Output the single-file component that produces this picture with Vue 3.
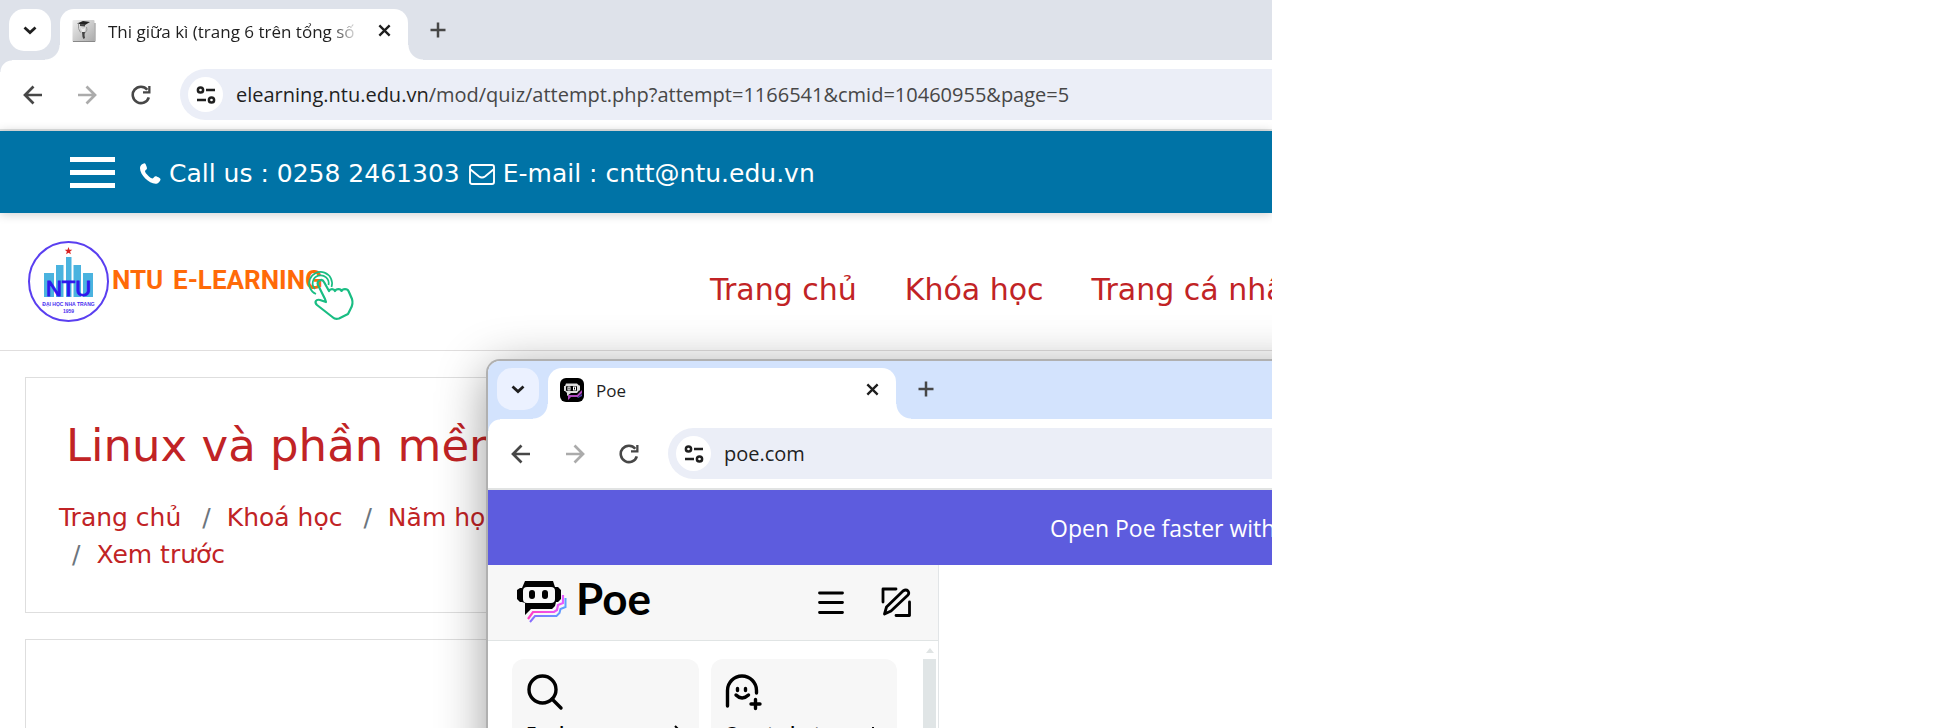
<script setup>
const navLinks = ['Trang chủ', 'Khóa học', 'Trang cá nhân']
const crumbs = ['Trang chủ', 'Khoá học', 'Năm học', 'Xem trước']
</script>

<template>
  <svg class="sprite" aria-hidden="true">
    <symbol id="i-chevron" viewBox="0 0 16 16"><path d="M2.500 5.500 8 10.500l5.500-5" fill="none" stroke="#1f1f1f" stroke-width="2.800" /></symbol>
    <symbol id="i-close" viewBox="0 0 16 16"><path d="M2.500 2.500l11 11M13.500 2.500l-11 11" fill="none" stroke="#1f1f1f" stroke-width="2.500" /></symbol>
    <symbol id="i-plus" viewBox="0 0 16 16"><path d="M8 .5v15M.5 8h15" fill="none" stroke="#474747" stroke-width="2.500" /></symbol>
    <symbol id="i-back" viewBox="0 0 20 20"><path d="M19 10H2.500M10.500 1.500 2 10l8.500 8.500" fill="none" stroke="currentColor" stroke-width="2.700" /></symbol>
    <symbol id="i-reload" viewBox="0 0 20 20">
      <path d="M17.800 12.300A8.200 8.200 0 1 1 16.300 4.700" fill="none" stroke="currentColor" stroke-width="2.600" />
      <path d="M19.500 1v7.500H12V6.200h5.200V1z" fill="currentColor" />
    </symbol>
    <symbol id="i-tune" viewBox="0 0 20 18">
      <g fill="none" stroke="#1f1f1f" stroke-width="2.500">
        <circle cx="4.500" cy="4" r="2.600" /><path d="M10 4h9M1 14h9" /><circle cx="15.500" cy="14" r="2.600" />
      </g>
    </symbol>
  </svg>

  <div class="desktop">
    <section class="browser">
      <div class="strip">
        <button class="search-tabs" aria-label="Search tabs"><svg width="16" height="16"><use href="#i-chevron" /></svg></button>
        <div class="tab">
          <svg class="favicon" width="24" height="24" viewBox="0 0 24 24">
            <defs><linearGradient id="fav" x1="0" y1="0" x2="1" y2="1"><stop offset="0" stop-color="#eee" /><stop offset="1" stop-color="#aaa" /></linearGradient></defs>
            <rect x=".5" y="1" width="22" height="22" rx="1" fill="url(#fav)" />
            <path d="M1 22.500h22V4" fill="none" stroke="#888" />
            <path d="M5 4.500 11 2l7 1-5 3z" fill="#222" />
            <path d="M8 5v2l5 .5V5.500" fill="#444" />
            <path d="M6.500 4.500v5l2 4M14.500 8l.5 3-2 3" fill="none" stroke="#999" />
            <path d="M8.500 8q2.500 4 5 0l-1 5-2 1z" fill="#ececec" />
            <path d="M10 13h3l-.5 3 .5 3-1.500 1-1-2z" fill="#444" />
          </svg>
          <span class="tab-title faded">Thi giữa kì (trang 6 trên tổng số</span>
          <button class="icon-btn" aria-label="Close tab"><svg width="15" height="15"><use href="#i-close" /></svg></button>
        </div>
        <button class="icon-btn new-tab" aria-label="New tab"><svg width="16" height="16"><use href="#i-plus" /></svg></button>
      </div>
      <div class="toolbar">
        <button class="nav-btn" aria-label="Back"><svg width="20" height="20"><use href="#i-back" /></svg></button>
        <button class="nav-btn off" aria-label="Forward"><svg class="flip" width="20" height="20"><use href="#i-back" /></svg></button>
        <button class="nav-btn" aria-label="Reload"><svg width="20" height="20"><use href="#i-reload" /></svg></button>
        <div class="omnibox">
          <button class="site-info" aria-label="Site information"><svg width="20" height="18"><use href="#i-tune" /></svg></button>
          <span class="url">elearning.ntu.edu.vn<span class="path">/mod/quiz/attempt.php?attempt=1166541&amp;cmid=10460955&amp;page=5</span></span>
        </div>
      </div>

      <div class="contact">
        <button class="burger" aria-label="Menu"><i></i><i></i><i></i></button>
        <svg class="phone" width="21" height="21" viewBox="0 0 21 21"><path d="M.5 3C1.500 1 3.500.2 4.800.2c.7 0 2.200 4 2.200 5 0 1.300-2 2-2 3 0 1.800 5.500 7.300 7.600 7.300 1 0 1.800-2.200 3-2.200 1 0 4.900 2 4.900 2.900 0 2-2.500 4.600-5 4.600C9 20.800 0 12 0 5.300 0 4.500.2 3.700.5 3z" fill="#fff" /></svg>
        <span class="contact-text">Call us : 0258 2461303</span>
        <svg class="mail" width="26" height="21" viewBox="0 0 26 21"><g fill="none" stroke="#fff" stroke-width="1.900"><rect x="1" y="1" width="24" height="19" rx="2" /><path d="M1.500 5.500 10 12.500q3 2 6 0l8.500-7" /></g></svg>
        <span class="contact-text">E-mail : cntt@ntu.edu.vn</span>
      </div>

      <header class="site-header">
        <a class="logo" href="#" aria-label="NTU E-Learning">
          <svg width="330" height="84" viewBox="0 0 330 84">
            <circle cx="41.500" cy="41.500" r="39.500" fill="#fff" stroke="#5a3ff0" stroke-width="2" />
            <path d="M41.500 7l1 2.700h2.800l-2.200 1.800.8 2.800-2.400-1.600-2.400 1.600.8-2.800-2.200-1.800h2.800z" fill="#d9201f" />
            <path d="M17 57V33h10v24zM29 57V25h7.500v32zM39 57V17h5.500v40zM46.500 57V25H54v32zM56 57V33h10v24z" fill="#4ab3df" />
            <text x="41.500" y="56" text-anchor="middle" class="logo-ntu">NTU</text>
            <text x="41.500" y="66" text-anchor="middle" class="logo-small">ĐẠI HỌC NHA TRANG</text>
            <text x="41.500" y="73" text-anchor="middle" class="logo-small">1959</text>
            <text x="85" y="49" class="logo-name">NTU</text>
            <text x="146" y="49" class="logo-name">E-LEARNING</text>
            <g fill="none" stroke="#19bd83" stroke-width="2.200" stroke-linejoin="round">
              <path d="M288 49a8 8 0 1 1 13.500-4M289 54a11.500 11.500 0 1 1 15.500-7" stroke-width="1.700" />
              <path d="M298 59 291 45c-2-4 4-7 6-3l5 9c1-2.500 5-2.500 6 0 1-2.500 6-2.500 6.500 0 1-2.500 6-2.500 7 0l3.500 8q1.500 5-1.500 10l-2.500 5-9 4.500q-4 1-6-1L290 65c-3-3-1-6 3-5l6 2z" />
            </g>
          </svg>
        </a>
        <nav class="site-nav"><a v-for="link in navLinks" :key="link" href="#">{{ link }}</a></nav>
      </header>

      <main class="content">
        <section class="card title-card">
          <h1>Linux và phần mềm</h1>
          <ol class="crumbs"><li v-for="c in crumbs" :key="c"><a href="#">{{ c }}</a></li></ol>
        </section>
        <section class="card body-card"></section>
      </main>
    </section>

    <section class="browser popup">
      <div class="strip">
        <button class="search-tabs" aria-label="Search tabs"><svg width="16" height="16"><use href="#i-chevron" /></svg></button>
        <div class="tab">
          <svg class="favicon" width="24" height="24" viewBox="0 0 24 24">
            <rect width="24" height="24" rx="6" fill="#000" />
            <path d="M8 17h9l5-5v3l-4 4h-7l-3 3z" fill="#b04ac0" />
            <path d="M9 20h8l5-4v2l-4 2h-7z" fill="#5347b8" />
            <path d="M6 5.500h11l2 2h1v5h-1l-2 2.500h-6l-4 3v-3l-2-2H4v-5h1z" fill="#ddd" />
            <rect x="6" y="8" width="11" height="5" rx="1" fill="#000" /><path d="M7.500 8.500h3v4h-3zM13 8.500h3v4h-3z" fill="#fff" />
            <path d="M8.500 9.500h1v2h-1zM14 9.500h1v2h-1z" fill="#000" />
          </svg>
          <span class="tab-title">Poe</span>
          <button class="icon-btn" aria-label="Close tab"><svg width="15" height="15"><use href="#i-close" /></svg></button>
        </div>
        <button class="icon-btn new-tab" aria-label="New tab"><svg width="16" height="16"><use href="#i-plus" /></svg></button>
      </div>
      <div class="toolbar">
        <button class="nav-btn" aria-label="Back"><svg width="20" height="20"><use href="#i-back" /></svg></button>
        <button class="nav-btn off" aria-label="Forward"><svg class="flip" width="20" height="20"><use href="#i-back" /></svg></button>
        <button class="nav-btn" aria-label="Reload"><svg width="20" height="20"><use href="#i-reload" /></svg></button>
        <div class="omnibox">
          <button class="site-info" aria-label="Site information"><svg width="20" height="18"><use href="#i-tune" /></svg></button>
          <span class="url">poe.com</span>
        </div>
      </div>
      <div class="banner">Open Poe faster with</div>
      <aside class="sidebar">
        <div class="side-head">
          <svg class="robot" width="50" height="42" viewBox="0 0 50 42">
            <defs>
              <linearGradient id="pk" x1="0" x2="1"><stop offset="0" stop-color="#ff3fc5" /><stop offset="1" stop-color="#e45cff" /></linearGradient>
              <linearGradient id="bl" x1="0" x2="1"><stop offset="0" stop-color="#8a6cff" /><stop offset="1" stop-color="#5aa2ff" /></linearGradient>
            </defs>
            <path d="M8 0h28l2 6h3l3 3v9l-3 3h-2l-1 4-3 3H14l-6 6V22l-3-1H3l-3-3V9l3-2h2z" fill="#000" />
            <rect x="6" y="6" width="32" height="16" rx="4" fill="#f7f7f7" />
            <rect x="12" y="9" width="6" height="9" rx="3" /><rect x="25" y="9" width="6" height="9" rx="3" />
            <path d="M46 14v8l-5 2-1 5-3 2H16l-5 7" fill="none" stroke="url(#pk)" stroke-width="2.200" />
            <path d="M48.500 17v9l-5 2-1 4-3 3H18l-5 6" fill="none" stroke="url(#bl)" stroke-width="2" />
          </svg>
          <span class="wordmark">Poe</span>
          <button class="side-btn" aria-label="Menu"><svg width="28" height="28" viewBox="0 0 28 28"><path d="M2.500 5h23M2.500 14.500h23M2.500 24.500h23" stroke="#000" stroke-width="2.800" stroke-linecap="round" /></svg></button>
          <button class="side-btn" aria-label="New chat"><svg width="30" height="30" viewBox="0 0 30 30"><g fill="none" stroke="#000" stroke-width="2.800" stroke-linejoin="round" stroke-linecap="round"><path d="M15 2H2v13M28.500 15v13.500H15" /><path d="M3.500 27 5.500 20 22 4q3-2 5 0 1.500 2 0 4L10 24z" /></g></svg></button>
        </div>
        <div class="side-body">
          <button class="tile">
            <svg width="38" height="38" viewBox="0 0 38 38"><g fill="none" stroke="#000" stroke-width="3.400" stroke-linecap="round"><circle cx="16.500" cy="16.500" r="13.500" /><path d="M26 26l9 9" /></g></svg>
            <span class="tile-row"><span>Explore</span><svg width="20" height="20" viewBox="0 0 20 20"><path d="M1 10h17M10 2l8 8-8 8" fill="none" stroke="#000" stroke-width="2" /></svg></span>
          </button>
          <button class="tile">
            <svg width="38" height="38" viewBox="0 0 38 38"><g fill="none" stroke="#000" stroke-width="3.400" stroke-linecap="round"><path d="M2.500 33V17.500a14.500 14.500 0 0 1 29 0V20" /><path d="M11 22q6 6 12.500 0" /><path d="M12.500 15.500v2M20.500 15.500v2" /><path d="M30.500 26.500v9M26 31h9" /></g></svg>
            <span class="tile-row"><span>Create bot</span><svg width="20" height="20" viewBox="0 0 20 20"><path d="M10 3v14M3 10h14" stroke="#000" stroke-width="2" /></svg></span>
          </button>
          <div class="scrollbar"><i class="up"></i><i class="thumb"></i></div>
        </div>
      </aside>
    </section>
  </div>
</template>

<style>
body { background: #fff; }
</style>

<style scoped>
* { box-sizing: border-box; }
.sprite { position: absolute; width: 0; height: 0; }
button { border: 0; padding: 0; margin: 0; background: none; color: inherit; font: inherit; display: flex; align-items: center; justify-content: center; flex: none; }
a { color: inherit; text-decoration: none; }
svg { flex: none; display: block; }
.desktop { position: relative; width: 65.47vw; height: 100vh; overflow: hidden; background: #fff; }
.browser { display: flex; flex-direction: column; height: 100%; font-family: "Open Sans", "Noto Sans", sans-serif; color: #1f1f1f; --strip: #dee2ea; --chip: #fff; background: #fff; }
.strip { display: flex; align-items: flex-start; gap: 9px; height: 60px; padding: 9px; background: var(--strip); flex: none; }
.search-tabs { width: 42px; height: 42px; border-radius: 15px; background: var(--chip); }
.tab { position: relative; display: flex; align-items: center; width: 348px; height: 51px; padding: 0 14px 8px 12px; background: #fff; border-radius: 14px 14px 0 0; flex: none; }
.tab::before, .tab::after { content: ""; position: absolute; bottom: 0; width: 15px; height: 15px; }
.tab::before { left: -15px; background: radial-gradient(circle at 0 0, transparent 14px, #fff 15px); }
.tab::after { right: -15px; background: radial-gradient(circle at 100% 0, transparent 14px, #fff 15px); }
.tab-title { flex: 1; margin: 0 12px; padding-top: 2px; font-size: 17px; line-height: 26px; white-space: nowrap; overflow: hidden; }
.faded { mask-image: linear-gradient(to right, #000 88%, transparent 99%); }
.icon-btn { width: 20px; height: 20px; }
.new-tab { margin: 11px 0 0 11px; }
.toolbar { position: relative; display: flex; align-items: center; height: 71px; padding-left: 6px; border-bottom: 2px solid #e1e3e3; background: #fff; flex: none; }
.toolbar::before { content: ""; position: absolute; left: 0; top: 0; width: 12px; height: 12px; background: radial-gradient(circle at 100% 100%, transparent 11px, var(--strip) 12px); }
.nav-btn { width: 54px; height: 51px; color: #474747; }
.off { color: #ababab; }
.flip { transform: scaleX(-1); }
.omnibox { display: flex; align-items: center; flex: 1; min-width: 0; height: 51px; margin-left: 12px; padding-left: 8px; background: #ebeef7; border-radius: 26px 0 0 26px; }
.site-info { width: 35px; height: 35px; border-radius: 50%; background: #fff; }
.url { margin-left: 13px; font-size: 20px; line-height: 28px; white-space: nowrap; }
.path { color: #474747; }

.contact { position: relative; z-index: 1; display: flex; align-items: center; height: 82px; padding-left: 70px; background: #0073a6; color: #fff; box-shadow: 0 1px 10px rgba(0, 0, 0, .2); flex: none; }
.burger { flex-direction: column; gap: 8px; width: 45px; margin-right: 25px; }
.burger i { width: 45px; height: 5px; background: #fff; }
.contact-text { padding-top: 4px; font: 25px/36px Verdana, "DejaVu Sans", sans-serif; white-space: nowrap; }
.phone { margin: 2px 8px 0 0; }
.mail { margin: 4px 8px 0 9px; }
.site-header { display: flex; align-items: center; height: 138px; padding-left: 27px; border-bottom: 1px solid #e0dede; flex: none; }
.logo-ntu { font: 22px "Liberation Sans", sans-serif; fill: #2f16ee; stroke: #2f16ee; stroke-width: 1px; }
.logo-small { font: bold 5px "Liberation Sans", sans-serif; fill: #4a2ff0; }
.logo-name { font: bold 26px Roboto, "Liberation Sans", sans-serif; fill: #ff6a08; }
.site-nav { display: flex; gap: 48px; margin: 16px 0 0 353px; font: 30px/40px Verdana, "DejaVu Sans", sans-serif; color: #c12325; white-space: nowrap; }
.content { flex: 1; display: flex; flex-direction: column; gap: 26px; padding: 26px 0 0 25px; min-height: 0; }
.card { border: 1px solid #dedede; flex: 1; }
.title-card { flex: none; padding: 36px 0 43px; height: 236px; color: #c12325; font-family: Verdana, "DejaVu Sans", sans-serif; }
.body-card { border-bottom: 0; }
h1 { margin: 0 0 21px 40px; font-size: 45px; line-height: 64px; font-weight: 400; white-space: nowrap; }
.crumbs { display: flex; flex-wrap: wrap; width: 520px; margin: 0; padding: 0 0 0 33px; list-style: none; font-size: 25px; line-height: 37px; }
.crumbs li + li::before { content: "/"; color: #6c757d; padding: 0 16px 0 13px; }
.crumbs li { margin-right: 8px; }

.popup { position: absolute; z-index: 2; left: 486px; top: 359px; right: 0; height: 500px; --strip: #d3e3fd; --chip: #ebf1ff; border: 2px solid #b0b0b0; border-right: 0; border-radius: 14px 0 0 0; overflow: hidden; }
.desktop::after { content: ""; position: absolute; z-index: 1; left: 488px; top: 370px; right: -60px; height: 500px; border-radius: 14px; box-shadow: 0 0 50px rgba(0, 0, 0, .42); }
.popup .strip { height: 58px; padding-top: 7px; }
.banner { height: 75px; padding: 1px 0 0 562px; background: #5d5cde; color: #fff; font-size: 23px; line-height: 75px; white-space: nowrap; flex: none; }
.sidebar { width: 451px; border-right: 1px solid #e2e5e7; flex: 1; color: #000; }
.side-head { display: flex; align-items: center; height: 76px; padding: 0 22px 2px 29px; background: #f7f7f7; border-bottom: 1px solid #e0e4e4; }
.wordmark { flex: 1; padding: 0 0 8px 9px; font: 700 44px/52px Lato, sans-serif; }
.side-btn { width: 40px; height: 40px; margin-left: 25px; }
.side-body { position: relative; display: flex; gap: 12px; padding: 18px 41px 0 24px; }
.tile { flex: 1; display: flex; flex-direction: column; align-items: flex-start; justify-content: flex-start; padding: 14px; height: 110px; border-radius: 12px; background: #f7f7f7; }
.tile-row { display: flex; align-items: center; justify-content: space-between; width: 100%; margin-top: 9px; font-size: 19px; line-height: 28px; font-weight: 600; }
.scrollbar { position: absolute; right: 2px; top: 7px; width: 13px; display: flex; flex-direction: column; align-items: center; gap: 6px; }
.up { border: 4px solid transparent; border-top: 0; border-bottom: 5px solid #e0e4e4; }
.thumb { width: 13px; height: 200px; background: #e0e5e6; }
</style>
